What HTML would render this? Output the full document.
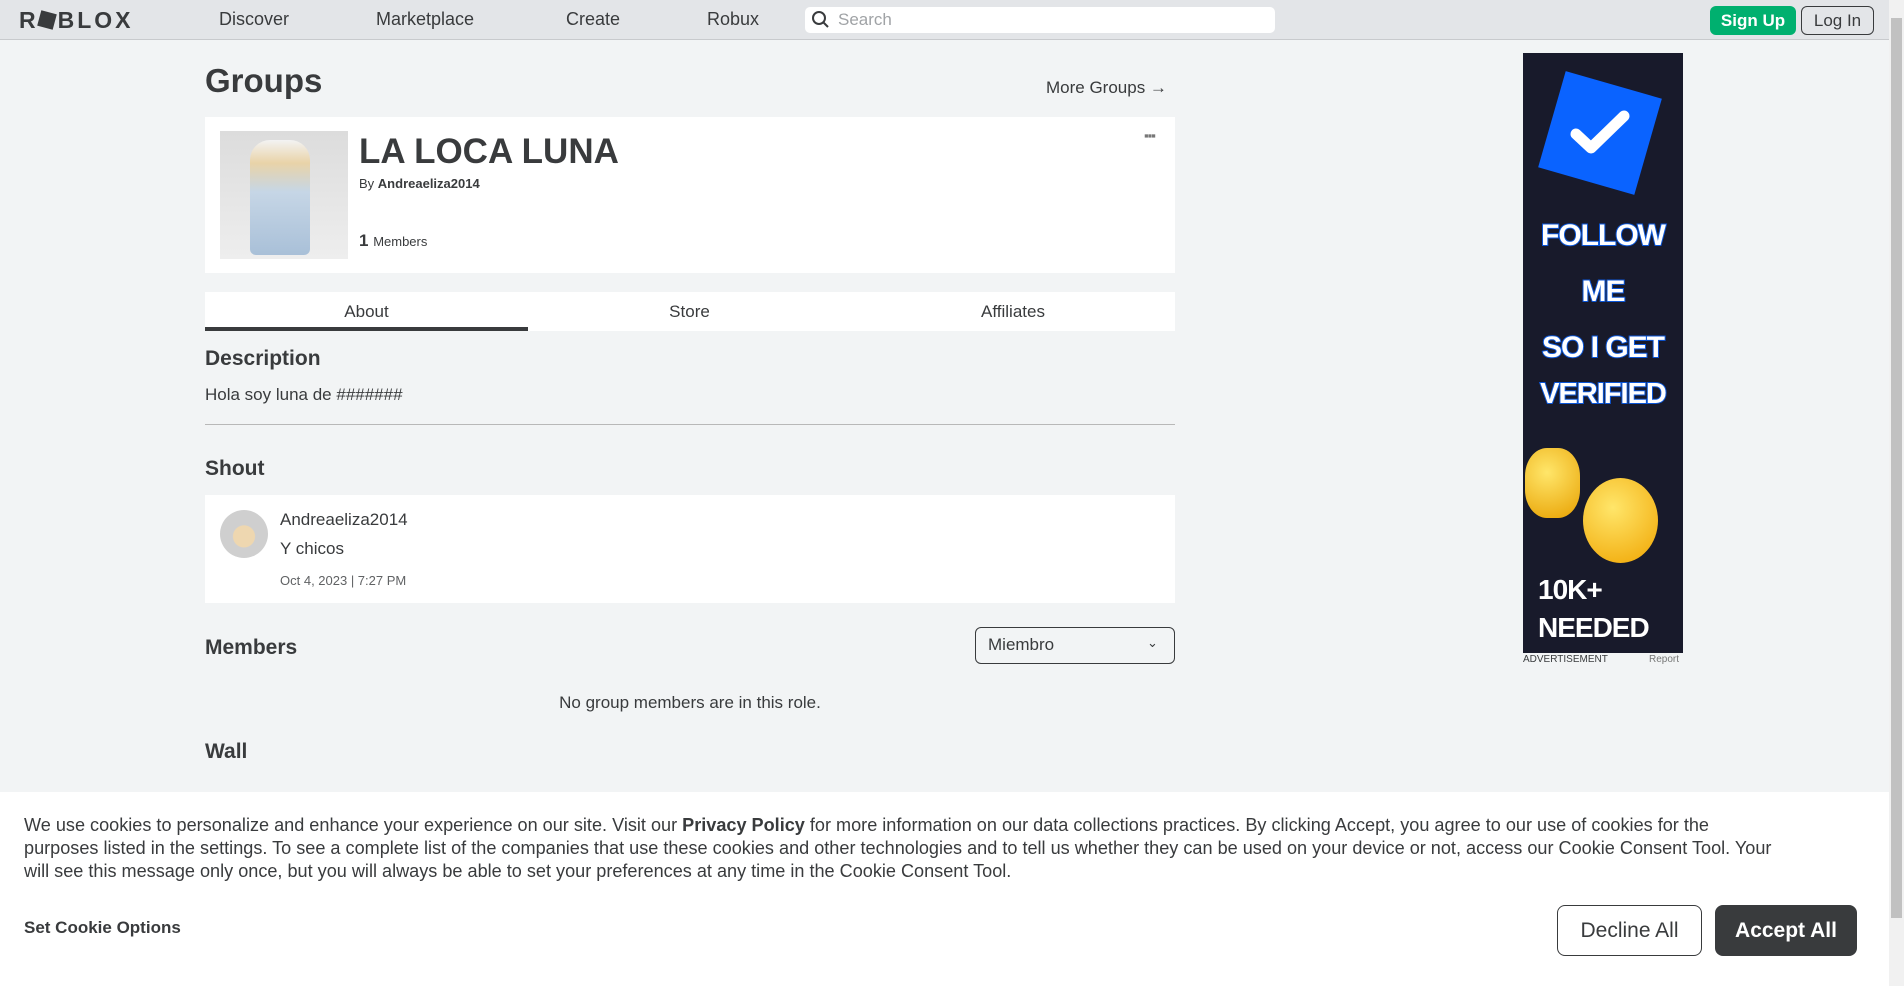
<!DOCTYPE html>
<html><head><meta charset="utf-8"><style>
*{margin:0;padding:0;box-sizing:border-box}
body{width:1904px;height:986px;overflow:hidden;background:#f2f4f5;font-family:"Liberation Sans",sans-serif;color:#393b3d;position:relative}
.a{position:absolute;white-space:nowrap}
.hdr{left:0;top:0;width:1889px;height:40px;background:#e3e5e8;border-bottom:1px solid #c8cacd}
.nav{top:9px;font-size:18px;color:#393b3d}
.h2{font-weight:bold;font-size:21px}
.ad{left:0;width:160px;text-align:center;color:#fff;font-weight:900;font-size:30px;letter-spacing:-1px;-webkit-text-stroke:2px #0b56d8;paint-order:stroke fill}
</style></head><body>
<div class="a hdr"></div>
<div class="a" style="left:19px;top:7px;font-size:23px;font-weight:900;letter-spacing:3px;color:#393b3d">R<span style="display:inline-block;width:16px;height:16px;background:#393b3d;transform:rotate(15deg);margin:0 3px 0 0"></span>BLOX</div>
<div class="a nav" style="left:219px">Discover</div>
<div class="a nav" style="left:376px">Marketplace</div>
<div class="a nav" style="left:566px">Create</div>
<div class="a nav" style="left:707px">Robux</div>
<div class="a" style="left:805px;top:7px;width:470px;height:26px;background:#fff;border-radius:5px"></div>
<svg class="a" style="left:811px;top:10px" width="20" height="20" viewBox="0 0 20 20"><circle cx="8" cy="8" r="6" fill="none" stroke="#393b3d" stroke-width="2"/><path d="M12 12l5 5" stroke="#393b3d" stroke-width="2"/></svg>
<div class="a" style="left:838px;top:10px;font-size:17px;color:#a0a3a6">Search</div>
<div class="a" style="left:1710px;top:6px;width:86px;height:29px;background:#00b06f;border-radius:6px;color:#fff;font-weight:bold;font-size:17px;text-align:center;line-height:29px">Sign Up</div>
<div class="a" style="left:1801px;top:6px;width:73px;height:29px;border:1px solid #393b3d;border-radius:6px;font-size:17px;text-align:center;line-height:27px">Log In</div>
<div class="a" style="left:1889px;top:0;width:15px;height:986px;background:#f1f1f1"></div>
<div class="a" style="left:1891px;top:18px;width:11px;height:900px;background:#c1c1c1"></div>

<div class="a" style="left:205px;top:62px;font-size:33px;font-weight:bold">Groups</div>
<div class="a" style="left:1046px;top:78px;font-size:17px">More Groups →</div>
<div class="a" style="left:205px;top:117px;width:970px;height:156px;background:#fff"></div>
<div class="a" style="left:220px;top:131px;width:128px;height:128px;background:linear-gradient(180deg,#dcdcdc,#eee)"></div>
<div class="a" style="left:250px;top:140px;width:60px;height:115px;background:linear-gradient(180deg,#f3f3f3 0%,#e9d3a8 20%,#c6d6e6 45%,#a9c0d8 100%);border-radius:20px 20px 6px 6px"></div>
<div class="a" style="left:359px;top:132px;font-size:35px;font-weight:bold;color:#393b3d">LA LOCA LUNA</div>
<div class="a" style="left:359px;top:176px;font-size:13px">By <span style="font-weight:bold">Andreaeliza2014</span></div>
<div class="a" style="left:359px;top:231px;font-size:17px;font-weight:bold">1 <span style="font-size:13px;font-weight:normal">Members</span></div>
<div class="a" style="left:1144px;top:128px;font-size:13px;letter-spacing:-1px;color:#777">▪▪▪</div>

<div class="a" style="left:205px;top:292px;width:970px;height:39px;background:#fff"></div>
<div class="a" style="left:205px;top:327px;width:323px;height:4px;background:#393b3d"></div>
<div class="a" style="left:205px;top:302px;width:323px;text-align:center;font-size:17px">About</div>
<div class="a" style="left:528px;top:302px;width:323px;text-align:center;font-size:17px">Store</div>
<div class="a" style="left:851px;top:302px;width:324px;text-align:center;font-size:17px">Affiliates</div>

<div class="a h2" style="left:205px;top:347px">Description</div>
<div class="a" style="left:205px;top:385px;font-size:17px">Hola soy luna de #######</div>
<div class="a" style="left:205px;top:424px;width:970px;height:1px;background:#b8b8b8"></div>
<div class="a h2" style="left:205px;top:457px">Shout</div>
<div class="a" style="left:205px;top:495px;width:970px;height:108px;background:#fff"></div>
<div class="a" style="left:220px;top:510px;width:48px;height:48px;border-radius:50%;background:radial-gradient(circle at 50% 55%,#eed7b0 0 30%,#cfcfcf 32%)"></div>
<div class="a" style="left:280px;top:510px;font-size:17px">Andreaeliza2014</div>
<div class="a" style="left:280px;top:539px;font-size:17px">Y chicos</div>
<div class="a" style="left:280px;top:573px;font-size:13px;color:#606264">Oct 4, 2023 | 7:27 PM</div>
<div class="a h2" style="left:205px;top:636px">Members</div>
<div class="a" style="left:975px;top:627px;width:200px;height:37px;border:1px solid #393b3d;border-radius:6px"></div>
<div class="a" style="left:988px;top:635px;font-size:17px">Miembro</div>
<div class="a" style="left:1147px;top:635px;font-size:13px">⌄</div>
<div class="a" style="left:205px;top:693px;width:970px;text-align:center;font-size:17px">No group members are in this role.</div>
<div class="a h2" style="left:205px;top:740px">Wall</div>

<div class="a" style="left:1523px;top:53px;width:160px;height:600px;background:#181a2b;overflow:hidden">
 <div class="a" style="left:27px;top:30px;width:100px;height:100px;background:#0a63ff;transform:rotate(16deg)"></div>
 <svg class="a" style="left:45px;top:55px" width="65" height="50" viewBox="0 0 65 50"><path d="M8 26l15 14L56 8" fill="none" stroke="#fff" stroke-width="11" stroke-linecap="round" stroke-linejoin="round"/></svg>
 <div class="a ad" style="top:166px">FOLLOW</div>
 <div class="a ad" style="top:222px">ME</div>
 <div class="a ad" style="top:278px">SO I GET</div>
 <div class="a ad" style="top:325px;font-size:29px">VERIFIED</div>
 <div class="a" style="left:60px;top:425px;width:75px;height:85px;border-radius:50%;background:radial-gradient(circle at 40% 35%,#ffe66a,#f0a400)"></div>
 <div class="a" style="left:2px;top:395px;width:55px;height:70px;border-radius:40%;background:radial-gradient(circle at 40% 35%,#ffe66a,#e8a000)"></div>
 <div class="a" style="left:15px;top:518px;color:#fff;font-weight:900;font-size:28px;line-height:38px;letter-spacing:-1px">10K+<br>NEEDED</div>
</div>
<div class="a" style="left:1523px;top:654px;font-size:10px;color:#393b3d">ADVERTISEMENT</div>
<div class="a" style="left:1649px;top:654px;font-size:10px;color:#777">Report</div>

<div class="a" style="left:0;top:792px;width:1889px;height:194px;background:#fff"></div>
<div class="a" style="left:24px;top:814px;font-size:18.1px;line-height:23px;color:#393b3d">We use cookies to personalize and enhance your experience on our site. Visit our <b>Privacy Policy</b> for more information on our data collections practices. By clicking Accept, you agree to our use of cookies for the<br>purposes listed in the settings. To see a complete list of the companies that use these cookies and other technologies and to tell us whether they can be used on your device or not, access our Cookie Consent Tool. Your<br>will see this message only once, but you will always be able to set your preferences at any time in the Cookie Consent Tool.</div>
<div class="a" style="left:24px;top:918px;font-size:17px;font-weight:bold">Set Cookie Options</div>
<div class="a" style="left:1557px;top:905px;width:145px;height:51px;border:1px solid #393b3d;border-radius:8px;text-align:center;line-height:49px;font-size:21px">Decline All</div>
<div class="a" style="left:1715px;top:905px;width:142px;height:51px;background:#393b3d;border-radius:8px;text-align:center;line-height:51px;font-size:21px;color:#fff;font-weight:bold">Accept All</div>
</body></html>
